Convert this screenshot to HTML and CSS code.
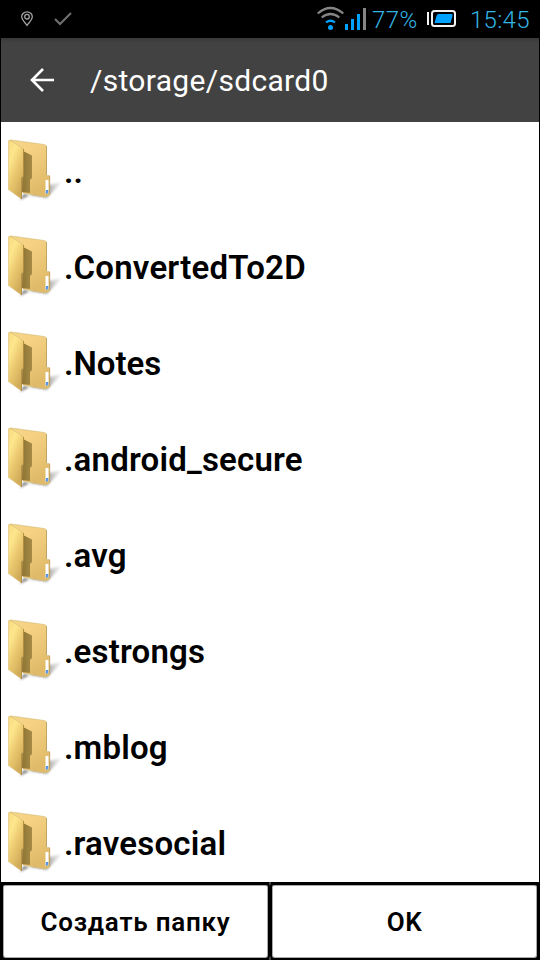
FILE: index.html
```html
<!DOCTYPE html>
<html lang="ru">
<head>
<meta charset="utf-8">
<title>/storage/sdcard0</title>
<link rel="stylesheet" href="styles.css">
</head>
<body>
<svg class="defs" width="0" height="0" aria-hidden="true">
  <defs>
    <linearGradient id="front" x1="0" y1="0" x2=".6" y2="1"><stop offset="0" stop-color="#f5d984"/><stop offset=".3" stop-color="#fde68c"/><stop offset=".6" stop-color="#ebc970"/><stop offset="1" stop-color="#d0aa57"/></linearGradient>
    <linearGradient id="back" x1="0" y1="0" x2=".5" y2="1"><stop offset="0" stop-color="#f3d685"/><stop offset=".35" stop-color="#f6d184"/><stop offset="1" stop-color="#dfbb69"/></linearGradient>
    <linearGradient id="shade" x1="0" y1="0" x2="1" y2="0"><stop offset="0" stop-color="#8e7535"/><stop offset="1" stop-color="#a68a46"/></linearGradient>
    <linearGradient id="shadow" x1="0" y1="0" x2="1" y2="0"><stop offset="0" stop-color="#555" stop-opacity=".8"/><stop offset=".7" stop-color="#777" stop-opacity=".55"/><stop offset="1" stop-color="#aaa" stop-opacity=".1"/></linearGradient>
    <filter id="soft" x="-20%" y="-20%" width="140%" height="140%"><feGaussianBlur stdDeviation="1"/></filter>
    <symbol id="folder" viewBox="0 0 64 64">
      <path d="M20 62L24 56L47 60L62 44L49 47Z" fill="url(#shadow)" filter="url(#soft)"/>
      <path d="M9 3Q9 2 11 2L44 6.500Q46.500 7 46.500 9V37.500H49.500V57L45 59L23 55L20 45Z" fill="url(#back)" stroke="#d9bd7b" stroke-width=".7"/>
      <path d="M23 13L32 17.500V40L30 42V55L22 54Z" fill="url(#shade)"/>
      <path d="M8.500 3.500Q8.500 1.500 11 3L23.500 10.500V38L21.500 40V61L8.500 51.500Z" fill="url(#front)" stroke="#d8bc77" stroke-width=".6"/>
      <path d="M23.500 11V38L21.500 40V61" fill="none" stroke="#a98538" stroke-width=".8"/>
      <path d="M46.500 8V37M49.700 38V56" fill="none" stroke="#b69450" stroke-width=".7"/>
      <path d="M45.500 42H48.500V55L45.500 56Z" fill="#fff"/>
      <path d="M45.800 52H48.300V55L45.800 56Z" fill="#5795e6"/>
    </symbol>
  </defs>
</svg>
<div class="screen">
  <div class="status">
    <div class="notices">
      <svg width="14" height="16" viewBox="0 0 14 16" fill="none" stroke="#a2a2a2" stroke-width="1.300"><path d="M7 14.300C5 11.500 1.700 8.800 1.700 5.800A5.300 5 0 0 1 12.300 5.800C12.300 8.800 9 11.500 7 14.300Z"/><circle cx="7" cy="5.700" r="2.300"/></svg>
      <svg class="check" width="18" height="14" viewBox="0 0 18 14" fill="none" stroke="#707070" stroke-width="2"><path d="M1 7L6 12L17 1"/></svg>
    </div>
    <div class="system">
      <svg width="50" height="26" viewBox="317 5 50 26"><g fill="none" stroke-width="2.200"><path d="M317.700 13.500Q330.500 2.500 343.300 13.500" stroke="#858585"/><path d="M321.700 17.500Q330.500 10.500 339.300 17.500" stroke="#858585"/><path d="M326 22.500Q330.500 19 335 22.500" stroke="#00a2ff"/></g><circle cx="330.500" cy="27.500" r="2.500" fill="#00a2ff"/><path d="M345 24h3v6h-3zM351 19h3v11h-3zM357 14h3v16h-3z" fill="#00a2ff"/><path d="M363 8h3v22h-3z" fill="#858585"/></svg>
      <span class="percent">77%</span>
      <svg class="battery" width="30" height="18" viewBox="427 9 30 18"><path d="M427 12h2v13h-2z" fill="#f4f4f4"/><rect x="432" y="11" width="23" height="15" rx="2.500" fill="none" stroke="#f4f4f4" stroke-width="2"/><path d="M438.500 14H451.500Q453 14 452.500 16L450.500 23H434.500L436.500 16Q437 14 438.500 14Z" fill="#00a2ff"/></svg>
      <span class="clock">15:45</span>
    </div>
  </div>
  <header class="bar">
    <svg width="24" height="24" viewBox="0 0 24 24" fill="none" stroke="#fff" stroke-width="2.600"><path d="M13 1L2 12L13 23M2 12H24"/></svg>
    <span class="path">/storage/sdcard0</span>
  </header>
  <main class="list">
    <div class="row"><svg class="folder"><use href="#folder"/></svg><span class="name">..</span></div>
    <div class="row"><svg class="folder"><use href="#folder"/></svg><span class="name">.ConvertedTo2D</span></div>
    <div class="row"><svg class="folder"><use href="#folder"/></svg><span class="name tight">.Notes</span></div>
    <div class="row"><svg class="folder"><use href="#folder"/></svg><span class="name">.android_secure</span></div>
    <div class="row"><svg class="folder"><use href="#folder"/></svg><span class="name">.avg</span></div>
    <div class="row"><svg class="folder"><use href="#folder"/></svg><span class="name">.estrongs</span></div>
    <div class="row"><svg class="folder"><use href="#folder"/></svg><span class="name">.mblog</span></div>
    <div class="row"><svg class="folder"><use href="#folder"/></svg><span class="name">.ravesocial</span></div>
  </main>
  <footer class="actions">
    <button class="action create">Создать папку</button>
    <button class="action ok">OK</button>
  </footer>
</div>
</body>
</html>
```
FILE: styles.css
```css
* { box-sizing: border-box; }
body { margin: 0; background: #000; font-family: Roboto, sans-serif; }
.defs { display: block; }
.screen { width: 540px; height: 960px; display: flex; flex-direction: column; overflow: hidden; }
.status { height: 38px; flex: none; display: flex; justify-content: space-between; background: #000; color: #33b5e5; font-size: 24px; font-weight: 360; line-height: 38px; }
.notices { display: flex; align-items: flex-start; padding: 11px 0 0 20px; }
.check { margin: 1px 0 0 20px; }
.system { display: flex; align-items: flex-start; padding-right: 10px; }
.system svg { flex: none; margin-top: 5px; }
.percent { width: 60px; padding-left: 5px; white-space: nowrap; padding-top: 1px; letter-spacing: .4px; }
.system .battery { margin-top: 9px; }
.clock { width: 73px; padding: 1px 0 0 13px; white-space: nowrap; letter-spacing: .3px; }
.bar { height: 84px; flex: none; margin: 0 1px; padding-left: 29px; display: flex; align-items: center; background: linear-gradient(#393939, #424242 5px); color: #fff; }
.path { margin-left: 36px; padding-top: 1px; font-size: 30px; line-height: 40px; letter-spacing: .32px; white-space: nowrap; }
.list { height: 760px; flex: none; margin: 0 1px; background: #fff; overflow: hidden; }
.row { height: 96px; display: flex; align-items: center; }
.folder { width: 64px; height: 64px; flex: none; margin-left: -1px; }
.name { font-size: 33px; font-weight: 600; line-height: 40px; letter-spacing: .2px; color: #000; white-space: nowrap; padding-top: 4px; }
.tight { letter-spacing: 0; }
.actions { height: 78px; flex: none; display: flex; background: linear-gradient(90deg, #000 269px, #444 269px 271px, #000 271px); padding: 0 1px; }
.action { appearance: none; width: 269px; height: 78px; margin: 0; padding: 0; border: solid #000; border-width: 3px 2px 2px; background: #fff; color: #000; font: 600 26px Roboto, sans-serif; border-radius: 5px; box-shadow: inset 0 0 0 1px #aaa; }
.create { letter-spacing: .78px; }
.ok { letter-spacing: .5px; }
```
